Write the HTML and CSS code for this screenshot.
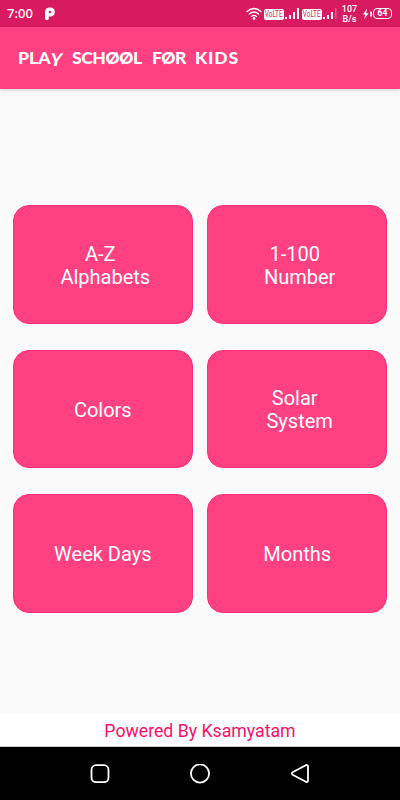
FILE: index.html
```html
<!DOCTYPE html>
<html lang="en">
<head>
<meta charset="utf-8">
<title>Play School For Kids</title>
<link rel="stylesheet" href="styles.css">
</head>
<body>
<div class="screen">
  <header class="status">
    <span class="clock">7:00</span>
    <svg class="app-icon" width="12" height="14" viewBox="0 0 12 14"><path fill-rule="evenodd" d="M1 4Q1.500.5 6 .5 10.800.5 10.800 5 10.800 9.300 6 9.500H4.800V11.500Q4.800 13.300 2.800 13.300 1 13.300 1 11.500ZM4.800 4V6.300H6Q7.300 6.300 7.300 5 7.300 4 6 4Z" fill="#fff"/></svg>
    <svg class="wifi" width="16" height="13" viewBox="0 0 16 13" fill="none" stroke="#fff" stroke-width="1.300" stroke-linecap="round"><path d="M1 4.500Q8-1.500 15 4.500M3.300 7Q8 3 12.700 7M5.600 9.400Q8 7.400 10.400 9.400"/><circle cx="8" cy="11.400" r=".7" fill="#fff"/></svg>
    <span class="volte"><span>VoLTE</span></span>
    <svg class="bars" width="15" height="12" viewBox="0 0 15 12" fill="#fff"><path d="M0 9h2v2H0zM4 7h2v4H4zM8 4h2v7H8zM12 0h2v11h-2z"/></svg>
    <span class="volte second"><span>VoLTE</span></span>
    <svg class="bars" width="15" height="12" viewBox="0 0 15 12" fill="#fff"><path d="M0 9h2v2H0zM4 7h2v4H4zM8 4h2v7H8z"/><path d="M12 0h1.500v11H12z" opacity=".3"/></svg>
    <span class="speed"><span>107</span><span>B/s</span></span>
    <svg class="bolt" width="9" height="12" viewBox="0 0 9 12" fill="#fff"><path d="M4 .5 0 6.500h2.300L1.300 11 5.500 5.200H3.200z"/><path d="M7.300 3.500H9v5H7.300z"/></svg>
    <span class="battery">64</span>
  </header>
  <div class="appbar">
    <h1 class="title"><span class="play">PLA<span class="loop">Y</span></span><span class="school">SCH<span class="o">O</span><span class="o">O</span>L</span><span class="for">F<span class="o">O</span>R</span><span class="kids">KIDS</span></h1>
  </div>
  <main class="grid">
    <button class="tile">A-Z 
 Alphabets</button>
    <button class="tile">1-100 
 Number</button>
    <button class="tile">Colors</button>
    <button class="tile">Solar 
 System</button>
    <button class="tile">Week Days</button>
    <button class="tile">Months</button>
  </main>
  <footer class="credit">Powered By Ksamyatam</footer>
  <nav class="nav">
    <svg width="20" height="20" viewBox="0 0 20 20"><rect x="1.500" y="1.200" width="17" height="17" rx="4.500"/></svg>
    <svg width="20" height="20" viewBox="0 0 20 20"><circle cx="10" cy="9.500" r="9.100"/></svg>
    <svg width="20" height="20" viewBox="0 0 20 20"><path d="M15.800 1.200 2.600 8.300Q1 9.500 2.600 10.700L15.800 17.800Q18 18.500 18 16.500V2.500Q18 .5 15.800 1.200Z"/></svg>
  </nav>
</div>
</body>
</html>
```

FILE: styles.css
```css
* { box-sizing: border-box; }
body { margin: 0; font-family: Roboto, "Liberation Sans", sans-serif; }
.screen { width: 400px; height: 800px; display: flex; flex-direction: column; background: #fafafa; overflow: hidden; }
.status { flex: none; height: 27px; background: #d81b60; color: #fff; display: flex; align-items: center; padding-left: 7px; }
.clock { width: 37px; font: 500 13px/27px "Noto Sans", sans-serif; }
.app-icon { margin-right: 190px; }
.wifi { margin-right: 2px; }
.volte { flex: none; width: 20px; height: 11px; margin: 1px 1px 0 0; border-radius: 2px; background: #fff; color: #d81b60; font: 8.500px/11px Roboto, sans-serif; display: flex; justify-content: center; white-space: nowrap; }
.volte span { transform: scaleX(.76); }
.second { margin-left: 2px; }
.bars { flex: none; }
.speed { width: 17px; margin-left: 3px; display: flex; flex-direction: column; align-items: center; font: 500 9px/10px Roboto, sans-serif; }
.bolt { margin-left: 5px; }
.battery { width: 19px; height: 11px; margin-left: 1px; border: 1px solid #fff; border-radius: 4px; font: 700 8.500px/9.500px Roboto, sans-serif; text-align: center; }
.appbar { flex: none; height: 62px; background: #ff4081; box-shadow: 0 1px 4px rgba(0,0,0,.18); padding: 20px 0 0 18px; }
.title { margin: 0; display: flex; color: #fff; font: 900 17.500px/22px Lato, sans-serif; }
.title > span { white-space: nowrap; }
.play { width: 54px; letter-spacing: .1px; }
.school { width: 80px; letter-spacing: -.4px; }
.for { width: 43px; letter-spacing: -.5px; }
.kids { width: 45px; letter-spacing: .9px; }
.o { position: relative; }
.o::after { content: ""; position: absolute; left: 6px; top: 4px; width: 1.5px; height: 14px; background: #fff; transform: rotate(35deg); }
.loop { display: inline-block; transform: skewX(-10deg) translateY(2px); }
.grid { flex: 1; display: grid; grid-template-columns: 180px 180px; grid-template-rows: repeat(3, 118.500px); column-gap: 14.400px; row-gap: 26px; justify-content: center; align-content: start; padding-top: 116.200px; }
.tile { margin: 0; padding: 3px 0 0; border: 1px solid #ff2c7d; border-radius: 16px; background: #ff4081; color: #fff; font: 20px/23.400px Roboto, sans-serif; text-align: center; white-space: pre; }
.credit { flex: none; height: 34px; background: #fff; border-bottom: 1px solid #ccc; color: #f5106c; font-size: 17.700px; line-height: 36px; text-align: center; }
.nav { flex: none; height: 53px; background: #000; display: flex; justify-content: center; align-items: center; gap: 80px; }
.nav svg { fill: none; stroke: #fff; stroke-width: 1.800; stroke-linejoin: round; }
```
